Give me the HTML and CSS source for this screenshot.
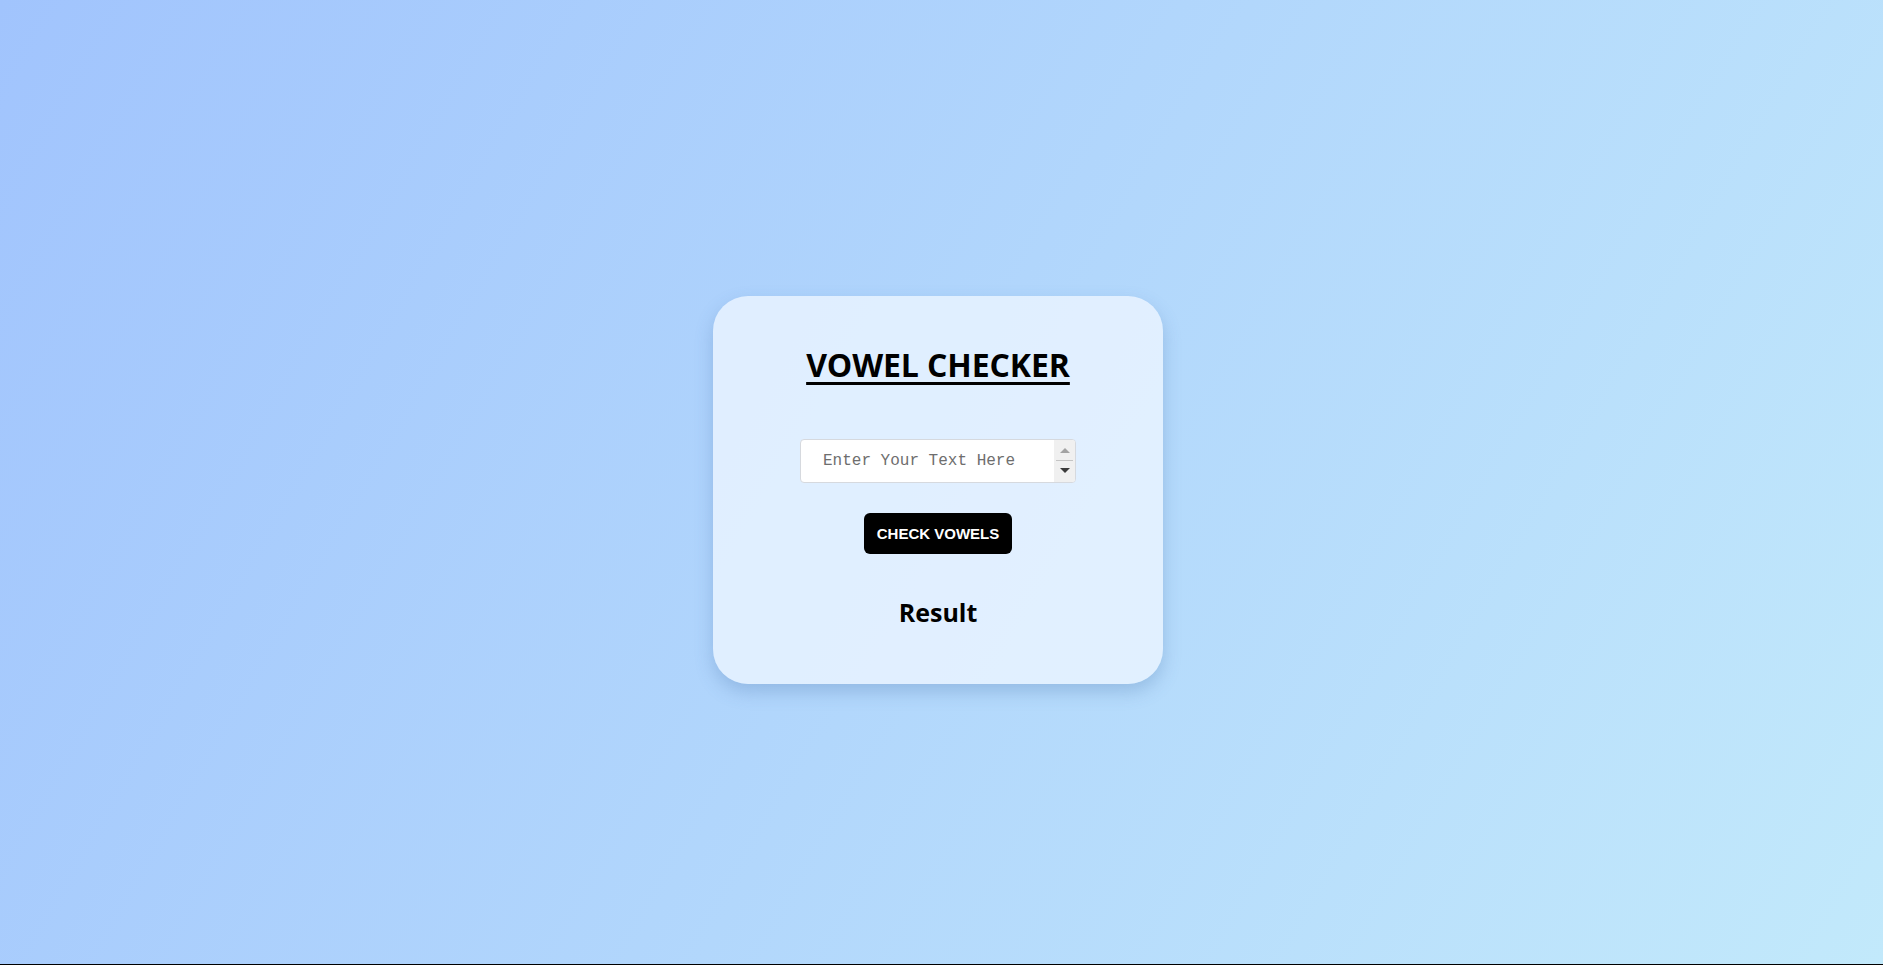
FILE: index.html
```html
<!DOCTYPE html>
<html lang="en">
<head>
<meta charset="utf-8">
<title>Vowel Checker</title>
<link rel="stylesheet" href="styles.css">
</head>
<body>
<main class="page">
  <section class="card">
    <h1 class="title">VOWEL CHECKER</h1>
    <div class="field">
      <input class="text-input" type="text" placeholder="Enter Your Text Here">
      <div class="spinner">
        <span class="arrow up"></span>
        <span class="divider"></span>
        <span class="arrow down"></span>
      </div>
    </div>
    <button class="check-btn" type="button">CHECK VOWELS</button>
    <h2 class="result">Result</h2>
  </section>
</main>
<div class="bottom-line"></div>
</body>
</html>
```

FILE: styles.css
```css
html, body {
  margin: 0;
  padding: 0;
  height: 100%;
  overflow: hidden;
}
body {
  background: linear-gradient(120deg, #a1c4fd 0%, #c2e9fb 100%);
  font-family: "Open Sans", "Liberation Sans", sans-serif;
  display: flex;
  flex-direction: column;
}
.page {
  flex: 1;
  display: flex;
  align-items: center;
  justify-content: center;
  padding: 15px 7px 0 0;
}
.card {
  width: 450px;
  height: 388px;
  box-sizing: border-box;
  background: rgba(236, 245, 255, 0.8);
  border-radius: 35px;
  box-shadow: 0 8px 18px rgba(70, 110, 170, 0.28);
  display: flex;
  flex-direction: column;
  align-items: center;
  padding-top: 49px;
}
.title {
  margin: 0;
  font-size: 32px;
  font-weight: 700;
  line-height: 40px;
  color: #000;
  text-decoration: underline;
  text-decoration-thickness: 3px;
  text-underline-offset: 5px;
  letter-spacing: -0.1px;
}
.field {
  margin-top: 54px;
  width: 276px;
  height: 44px;
  box-sizing: border-box;
  border: 1px solid #d6d9de;
  border-radius: 4px;
  background: #fff;
  display: flex;
  overflow: hidden;
}
.text-input {
  flex: 1;
  min-width: 0;
  border: none;
  outline: none;
  background: transparent;
  padding: 0 0 0 22px;
  font-family: "Liberation Mono", "DejaVu Sans Mono", monospace;
  font-size: 16px;
  color: #333;
}
.text-input::placeholder {
  color: #6e6e6e;
}
.spinner {
  width: 21px;
  background: #f0f0f0;
  display: flex;
  flex-direction: column;
  align-items: center;
  justify-content: center;
  gap: 7px;
}
.arrow {
  width: 0;
  height: 0;
  border-left: 5px solid transparent;
  border-right: 5px solid transparent;
}
.arrow.up {
  border-bottom: 5px solid #a3a3a3;
}
.arrow.down {
  border-top: 5px solid #3a3a3a;
}
.divider {
  width: 17px;
  height: 1px;
  background: #c4c4c4;
}
.check-btn {
  margin-top: 30px;
  width: 148px;
  height: 41px;
  border: none;
  border-radius: 6px;
  background: #000;
  color: #fff;
  font-family: "Liberation Sans", Arial, sans-serif;
  font-weight: 700;
  font-size: 15px;
  padding: 0;
  cursor: pointer;
}
.result {
  margin: 42px 0 0;
  font-size: 25px;
  font-weight: 700;
  line-height: 32px;
  color: #000;
}
.bottom-line {
  height: 1px;
  background: #000;
  flex: none;
}
```
